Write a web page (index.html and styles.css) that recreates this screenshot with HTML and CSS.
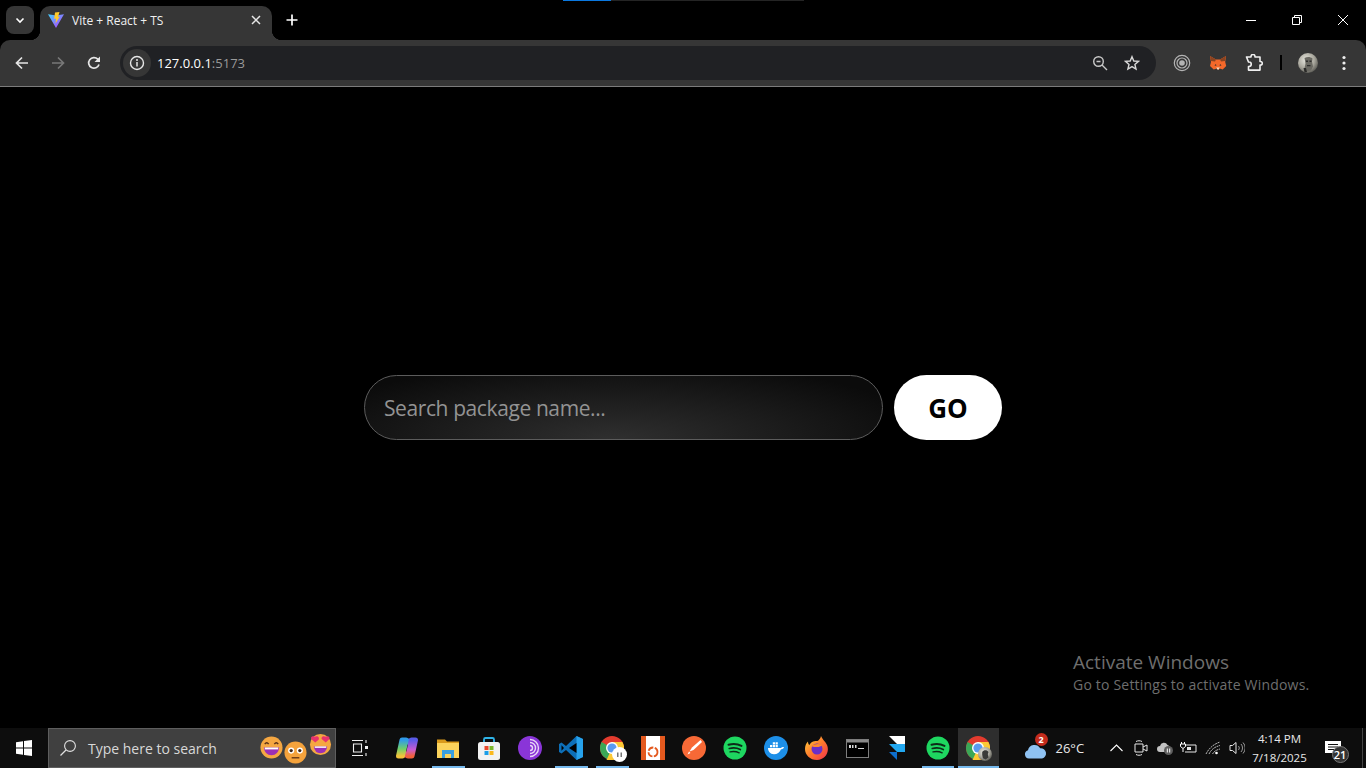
FILE: index.html
```html
<!DOCTYPE html>
<html lang="en">
<head>
  <meta charset="UTF-8" />
  <meta name="viewport" content="width=device-width, initial-scale=1.0"/>
  <title>Vite + React + TS</title>
  <link rel="stylesheet" href="styles.css">
</head>
<body>

  <svg class="defs" width="0" height="0">
    <defs>
      <symbol id="chrome" viewBox="0 0 24 24">
        <circle cx="12" cy="12" r="12" fill="#e33b2e"/>
        <path d="M12 12 1.600 6A12 12 0 0 0 8 23.300Z" fill="#3aa757"/>
        <path d="M12 12 6.500 24H12A12 12 0 0 0 22.400 6H12Z" fill="#fcc934"/>
        <circle cx="12" cy="12" r="6" fill="#fff"/>
        <circle cx="12" cy="12" r="4.600" fill="#5a9bf0"/>
      </symbol>
      <symbol id="spotify" viewBox="0 0 24 24">
        <circle cx="12" cy="12" r="11.500" fill="#1ed760"/>
        <g fill="none" stroke="#0d2b18" stroke-linecap="round">
          <path d="M5.500 8.800c4.500-1.300 9-1 13 1.100" stroke-width="2"/>
          <path d="M6.300 12.500c4-1 7.700-.7 11 1" stroke-width="1.700"/>
          <path d="M7 15.900c3.300-.8 6.400-.5 9.200.9" stroke-width="1.400"/>
        </g>
      </symbol>
    </defs>
  </svg>

  <div class="loader"><div class="loader-fill"></div></div>

  <header class="chrome">
    <div class="tabstrip">
      <button class="tab-menu">
        <svg width="12" height="12" viewBox="0 0 12 12"><path d="M2.500 4.500 6 8l3.500-3.500" fill="none" stroke="#fff" stroke-width="1.600"/></svg>
      </button>
      <div class="tab">
        <svg class="favicon" width="16" height="16" viewBox="0 0 16 16">
          <defs>
            <linearGradient id="viteA" x1="0" y1="0" x2="1" y2="1"><stop offset="0" stop-color="#41d1ff"/><stop offset="1" stop-color="#bd34fe"/></linearGradient>
          </defs>
          <path d="M0 2.200 8 16l8-13.800-5 .9L8 3.600 5 3Z" fill="url(#viteA)"/>
          <path d="M7 .5 11.500 0 10 5l1.800-.4L7.500 11.500l.6-5-1.900.4Z" fill="#ffc928"/>
        </svg>
        <span class="tab-title">Vite + React + TS</span>
        <svg class="tab-close" width="10" height="10" viewBox="0 0 10 10"><path d="M1 1l8 8M9 1 1 9" stroke="#e6e6e6" stroke-width="1.500"/></svg>
      </div>
      <button class="new-tab">
        <svg width="12" height="12" viewBox="0 0 12 12"><path d="M6 .5v11M.5 6h11" stroke="#fff" stroke-width="1.700"/></svg>
      </button>
      <div class="window-controls">
        <button class="win-btn"><svg width="10" height="10" viewBox="0 0 10 10"><path d="M0 5.500h10" stroke="#fff"/></svg></button>
        <button class="win-btn"><svg width="10" height="10" viewBox="0 0 10 10"><path d="M.5 2.500h7v7h-7zM2.500 2.500v-2h7v7h-2" fill="none" stroke="#fff"/></svg></button>
        <button class="win-btn"><svg width="10" height="10" viewBox="0 0 10 10"><path d="M0 0l10 10M10 0 0 10" stroke="#fff"/></svg></button>
      </div>
    </div>

    <div class="toolbar">
      <button class="tool-btn">
        <svg width="16" height="16" viewBox="0 0 16 16"><path d="M14 8H3M8 2.500 2.500 8 8 13.500" fill="none" stroke="#e6e6e6" stroke-width="1.700"/></svg>
      </button>
      <button class="tool-btn">
        <svg width="16" height="16" viewBox="0 0 16 16"><path d="M2 8h11M8 2.500 13.500 8 8 13.500" fill="none" stroke="#787878" stroke-width="1.700"/></svg>
      </button>
      <button class="tool-btn">
        <svg width="16" height="16" viewBox="0 0 16 16"><path d="M13 9.500A5.300 5.300 0 1 1 11.800 4.200L13.400 5.800" fill="none" stroke="#e6e6e6" stroke-width="1.700"/><path d="M14 1.500V7H8.500Z" fill="#e6e6e6"/></svg>
      </button>

      <div class="omnibox">
        <span class="site-info">
          <svg width="16" height="16" viewBox="0 0 16 16"><circle cx="8" cy="8" r="6.500" fill="none" stroke="#e6e6e6" stroke-width="1.400"/><path d="M8 7v4.500" stroke="#e6e6e6" stroke-width="1.500"/><circle cx="8" cy="4.900" r="1" fill="#e6e6e6"/></svg>
        </span>
        <span class="url">127.0.0.1<span class="url-port">:5173</span></span>
        <svg class="omni-icon" width="16" height="16" viewBox="0 0 16 16"><circle cx="6.500" cy="6.500" r="4.800" fill="none" stroke="#c8c8c8" stroke-width="1.400"/><path d="M4.500 6.500h4M10 10l5 5" stroke="#c8c8c8" stroke-width="1.400"/></svg>
        <svg class="omni-icon" width="16" height="16" viewBox="0 0 16 16"><path d="M8 1.700 9.800 6l4.700.4-3.600 3 1.100 4.600L8 11.600 3.900 14 5 9.400l-3.500-3L6.200 6Z" fill="none" stroke="#d8d8d8" stroke-width="1.400"/></svg>
      </div>

      <button class="tool-btn">
        <svg width="18" height="18" viewBox="0 0 18 18"><circle cx="9" cy="9" r="7.700" fill="none" stroke="#b4b4b4" stroke-width="1.200"/><circle cx="9" cy="9" r="5" fill="none" stroke="#b4b4b4" stroke-width="1.200"/><circle cx="9" cy="9" r="2.800" fill="#b4b4b4"/></svg>
      </button>
      <button class="tool-btn">
        <svg width="18" height="16" viewBox="0 0 18 16"><path d="M1 1l6 3.500h4L17 1l-.8 6 1 4-3.500 3.500-3-1-1.500 1.500-1.500-1.500-3 1L1 11l1-4Z" fill="#f4682a"/><path d="M1 1l6 3.500L6 6.500 2 6ZM17 1l-6 3.500L12 6.500l4-.5Z" fill="#8a4320"/><path d="M6.800 9 5.500 10.800 7.500 10.500ZM11.200 9l1.300 1.800-2-.3Z" fill="#2b2b2b"/><path d="M7.200 12.500h3.600L9 15Z" fill="#f6dcc6"/></svg>
      </button>
      <button class="tool-btn">
        <svg width="18" height="18" viewBox="0 0 18 18"><path d="M1.500 3.500H6V3a2 2 0 0 1 4 0v.5h5V8h.5a1.800 1.800 0 0 1 0 3.600H15v5H3.500V13H4a2 2 0 0 0 0-4.500h-.5Z" transform="translate(0 -.5)" fill="none" stroke="#f0f0f0" stroke-width="1.600" stroke-linejoin="round"/></svg>
      </button>
      <span class="tool-sep"></span>
      <button class="tool-btn">
        <svg width="20" height="20" viewBox="0 0 20 20"><defs><radialGradient id="avatar" cx=".4" cy=".35" r=".7"><stop offset="0" stop-color="#e8e8e0"/><stop offset=".6" stop-color="#a8a69c"/><stop offset="1" stop-color="#55554f"/></radialGradient></defs><circle cx="10" cy="10" r="10" fill="url(#avatar)"/><path d="M6.500 5c2.500-1.500 6-1.500 8 .5l-.5 3 1 5-2 4-4 1-2.500-3 1-5Z" fill="#6a6962"/><path d="M8 7.500h2v1.500H8zM11.500 7.500h2v1.500h-2zM9 12h3.500v1.200H9z" fill="#2e2e2c"/><path d="M5.500 15h2.500l1 4H6.500Z" fill="#2a2a28"/></svg>
      </button>
      <button class="tool-btn">
        <svg width="4" height="16" viewBox="0 0 4 16"><circle cx="2" cy="2.500" r="1.600" fill="#eee"/><circle cx="2" cy="8" r="1.600" fill="#eee"/><circle cx="2" cy="13.500" r="1.600" fill="#eee"/></svg>
      </button>
    </div>
  </header>

  <main class="page">
    <form class="search">
      <input class="search-input" type="text" placeholder="Search package name..." />
      <button class="search-btn" type="button">GO</button>
    </form>
  </main>

  <div class="activate">
    <div class="activate-title">Activate Windows</div>
    <div class="activate-sub">Go to Settings to activate Windows.</div>
  </div>

  <footer class="taskbar">
    <button class="start">
      <svg width="16" height="16" viewBox="0 0 16 16"><path d="M0 2.300 7 1.300v6.300H0ZM8 1.100 16 0v7.600H8ZM0 8.500h7v6.300L0 13.800ZM8 8.500h8V16l-8-1.100Z" fill="#fff"/></svg>
    </button>
    <div class="task-search">
      <svg width="18" height="18" viewBox="0 0 18 18"><circle cx="11" cy="7" r="5.400" fill="none" stroke="#e0e0e0" stroke-width="1.100"/><path d="M7 11l-5.500 5.500" stroke="#e0e0e0" stroke-width="1.300"/></svg>
      <span class="task-search-text">Type here to search</span>
      <svg class="emoji emoji-a" width="23" height="23" viewBox="0 0 24 24"><circle cx="12" cy="12" r="11.500" fill="#f5a742"/><path d="M5 8.500q2-3 4 0M15 8.500q2-3 4 0" fill="none" stroke="#5a3018" stroke-width="1.500"/><path d="M4 12h16q-1 8-8 8t-8-8Z" fill="#9b2fb5"/><path d="M5 12h14v2H5z" fill="#fff"/></svg>
      <svg class="emoji emoji-b" width="23" height="23" viewBox="0 0 24 24"><circle cx="12" cy="12" r="11.500" fill="#f5a33c"/><circle cx="7.500" cy="10" r="3.200" fill="#fff"/><circle cx="16.500" cy="10" r="3.200" fill="#fff"/><circle cx="7.500" cy="10" r="1.700" fill="#40281a"/><circle cx="16.500" cy="10" r="1.700" fill="#40281a"/><path d="M8 17.500h8" stroke="#6a3a18" stroke-width="1.500"/></svg>
      <svg class="emoji emoji-c" width="23" height="23" viewBox="0 0 24 24"><circle cx="12" cy="12" r="11" fill="#f5a742"/><path d="M5 14h14q-1 7-7 7t-7-7Z" fill="#9b2fb5"/><path d="M6 14h12v1.500H6z" fill="#fff"/><path d="M6.500 10 2.500 6.500C1 4.500 3.500 2 6 4c2.500-2 5.500.5 4 3ZM17.500 10l-4-3.500c-1.500-2 1.500-4.500 4-2.500 2.500-2 5 .5 3.500 2.500Z" fill="#e8336d"/></svg>
    </div>
    <button class="task-view">
      <svg width="18" height="18" viewBox="0 0 18 18"><path d="M1 1.500h11M1 16.500h11M2.500 5h8v8h-8z" fill="none" stroke="#f0f0f0" stroke-width="1.100"/><path d="M15 1v3M15 14v3" stroke="#f0f0f0" stroke-width="1.100"/><path d="M14 7h3v3h-3z" fill="#f0f0f0"/></svg>
    </button>

    <div class="apps">
      <div class="app">
        <svg width="24" height="24" viewBox="0 0 24 24"><defs><linearGradient id="copA" x1="0" y1="0" x2="0" y2="1"><stop offset="0" stop-color="#2f9bea"/><stop offset=".55" stop-color="#6fd06a"/><stop offset="1" stop-color="#f2c23a"/></linearGradient><linearGradient id="copB" x1="0" y1="0" x2="0" y2="1"><stop offset="0" stop-color="#5a5be8"/><stop offset=".6" stop-color="#c85bd0"/><stop offset="1" stop-color="#f0603a"/></linearGradient></defs><path d="M9 2.500h8v6H11Z" fill="#3f7fe8"/><path d="M6 21.500h8v-6H8Z" fill="#e8506a"/><path d="M7 4h4L7.500 20H3.500Z" fill="url(#copA)" stroke="url(#copA)" stroke-width="5" stroke-linejoin="round"/><path d="M17 20h-4l3.500-16h4Z" fill="url(#copB)" stroke="url(#copB)" stroke-width="5" stroke-linejoin="round"/></svg>
      </div>
      <div class="app app-open">
        <svg width="22" height="22" viewBox="0 0 22 22"><path d="M0 2.500h8l2 2h12v2H0Z" fill="#d99a1c"/><path d="M0 6h22v15H0Z" fill="#fbd35c"/><path d="M5 13h12v8h-3v-4H8v4H5Z" fill="#3aa0e0"/></svg>
      </div>
      <div class="app">
        <svg width="24" height="24" viewBox="0 0 24 24"><path d="M7 6V3.500a1.500 1.500 0 0 1 1.500-1.500h7A1.500 1.500 0 0 1 17 3.500V6" fill="none" stroke="#2fb4e8" stroke-width="1.800"/><rect x="1" y="6" width="22" height="18" rx="2.500" fill="#f2f2f2"/><path d="M7.500 10H11.500V14H7.500Z" fill="#e8492c"/><path d="M12.500 10H16.500V14H12.500Z" fill="#7cb82a"/><path d="M7.500 15H11.500V19H7.500Z" fill="#1c9ee8"/><path d="M12.500 15H16.500V19H12.500Z" fill="#fbb91c"/></svg>
      </div>
      <div class="app">
        <svg width="24" height="24" viewBox="0 0 24 24"><circle cx="12" cy="12" r="12" fill="#8a35d8"/><g fill="none" stroke="#e8d8f5"><path d="M12 3.500a8.500 8.500 0 0 1 0 17" stroke-width="1.400"/><path d="M12 6.500a5.500 5.500 0 0 1 0 11" stroke-width="1.400"/><path d="M12 9.500a2.500 2.500 0 0 1 0 5" stroke-width="1.400"/></g></svg>
      </div>
      <div class="app app-open">
        <svg width="24" height="24" viewBox="0 0 24 24"><path d="M17.500 0 24 3v18l-6.500 3L7 14l-4.500 3.500L0 16V8l2.500-1.500L7 10Z" fill="#0d6fb8"/><path d="M17.500 0 24 3v18l-6.500 3Z" fill="#27a2ec"/><path d="M17.500 7v10L10 12Z" fill="#000"/><path d="M2.500 9.200 5 12l-2.500 2.800Z" fill="#000"/></svg>
      </div>
      <div class="app app-open">
        <svg class="app-stack" width="24" height="24"><use href="#chrome"/></svg>
        <span class="chrome-badge"><svg width="7" height="6" viewBox="0 0 7 6"><path d="M1 .5h1.500V5H1zM4.500.5H6V5H4.500z" fill="#777"/></svg></span>
      </div>
      <div class="app">
        <svg width="24" height="24" viewBox="0 0 24 24"><rect width="24" height="24" fill="#fff"/><path d="M0 0h5v24H0ZM19 0h5v24h-5Z" fill="#e4591e"/><circle cx="12" cy="16" r="4.500" fill="none" stroke="#e4591e" stroke-width="1.800" stroke-dasharray="6 1.500"/></svg>
      </div>
      <div class="app">
        <svg width="24" height="24" viewBox="0 0 24 24"><circle cx="12" cy="12" r="12" fill="#f76936"/><path d="M18.500 4 10 11.500 7.500 15.500 11.500 14 20 6Z" fill="#fff"/><path d="M5.500 18.500 7 15.500 8.500 17Z" fill="#fff"/></svg>
      </div>
      <div class="app"><svg width="24" height="24"><use href="#spotify"/></svg></div>
      <div class="app">
        <svg width="24" height="24" viewBox="0 0 24 24"><circle cx="12" cy="12" r="12" fill="#1d8fe8"/><path d="M4 12h13c.6-1 2-1.300 3-.8-.5 1.400-1.800 2-3 2-1 3-4 5-7 5-4 0-6-3-6-6.200Z" fill="#fff"/><path d="M6 9h2.200v2.200H6zM8.800 9H11v2.200H8.800zM11.600 9h2.200v2.200h-2.200zM8.800 6.300H11v2.200H8.800zM11.600 6.300h2.200v2.200h-2.200z" fill="#fff"/></svg>
      </div>
      <div class="app">
        <svg width="24" height="24" viewBox="0 0 24 24"><defs><linearGradient id="foxA" x1="0" y1="0" x2="1" y2="1"><stop offset="0" stop-color="#ffd23c"/><stop offset=".5" stop-color="#ff7a2c"/><stop offset="1" stop-color="#f0304c"/></linearGradient></defs><path d="M16 0c1 3 4 5 6 9 3 7-2 15-10 15C5 24 0 19 0 13c0-3 1-6 3-7.500 0 2 .5 3 1.500 3.500C6 5 10 5 12.500 5 14 4 15.500 2.500 16 0Z" fill="url(#foxA)"/><circle cx="12" cy="13" r="5.500" fill="#6a2fc8"/><path d="M6 10c3-2 8-3 11-1-1 1.500-3 2-5 2-2 0-4 0-6-1Z" fill="#ff8a2c"/></svg>
      </div>
      <div class="app">
        <svg width="23" height="19" viewBox="0 0 23 19"><rect x=".5" y=".5" width="22" height="18" fill="#000" stroke="#7e7e7e"/><path d="M1 1h21v2.500H1Z" fill="#8a8a8a"/><path d="M3 6h2v3H3zM6 6h1.500v3H6zM9 6h1.500v3H9zM12 9h6v1h-6z" fill="#d8d8d8"/></svg>
      </div>
      <div class="app">
        <svg width="18" height="24" viewBox="0 0 18 24"><path d="M0 0h16v8H8Z" fill="#fff"/><path d="M0 8h16v8H8L0 8Z" fill="#22a8f0"/><path d="M0 16h8v8Z" fill="#0d6ecc"/></svg>
      </div>
      <div class="app app-open"><svg width="24" height="24"><use href="#spotify"/></svg></div>
      <div class="app app-open app-active">
        <svg class="app-stack" width="24" height="24"><use href="#chrome"/></svg>
        <svg class="chrome-avatar" width="14" height="14" viewBox="0 0 20 20"><circle cx="10" cy="10" r="10" fill="url(#avatar)"/><path d="M6 7c2-3 7-3 9 0l-1 3 1 5-4 3-4-2-1-5Z" fill="#3a3a38"/></svg>
      </div>
    </div>

    <div class="weather">
      <svg class="weather-cloud" width="25" height="16" viewBox="0 0 26 17"><path d="M6 16.500a4.500 4.500 0 0 1-1-8.800 7 7 0 0 1 13-2 5.500 5.500 0 0 1 2 10.800Z" fill="#8fc2f2"/></svg>
      <span class="weather-badge">2</span>
      <span class="weather-temp">26°C</span>
    </div>

    <div class="tray">
      <span class="tray-item"><svg width="13" height="8" viewBox="0 0 13 8"><path d="M.5 7 6.500 1l6 6" fill="none" stroke="#fff" stroke-width="1.100"/></svg></span>
      <span class="tray-item"><svg width="14" height="18" viewBox="0 0 14 18"><path d="M1 5h8v8H1zM9 8l4-2v6l-4-2" fill="none" stroke="#e8e8e8"/><path d="M2 2.500c2-1 4-1 6 0M2 15.500c2 1 4 1 6 0" fill="none" stroke="#e8e8e8"/></svg></span>
      <span class="tray-item"><svg width="16" height="14" viewBox="0 0 16 14"><path d="M3 11a3 3 0 0 1 0-6 4 4 0 0 1 7.500-1A3.500 3.500 0 0 1 13 9v2Z" fill="#c4c4c4"/><circle cx="11.500" cy="9.500" r="4.500" fill="#5e5e5e"/><path d="M10.300 7.500v4M12.700 7.500v4" stroke="#fff"/></svg></span>
      <span class="tray-item"><svg width="17" height="12" viewBox="0 0 17 12"><path d="M5 3h11v7H5" fill="none" stroke="#e8e8e8"/><path d="M7 5h4v3H7z" fill="#e8e8e8"/><path d="M1.500 0v2M4.500 0v2M.5 2h5v2.500L3 6.500.5 4.500ZM3 6.500V10" fill="none" stroke="#fff"/></svg></span>
      <span class="tray-item"><svg width="16" height="14" viewBox="0 0 16 14"><path d="M1 13C4 7 9 3 15 1M4 13c2-4 5-7 11-8.500M7.500 13c1.500-2.500 3.500-4 7.500-5" fill="none" stroke="#b8b8b8" stroke-dasharray="2 .7"/><circle cx="11.500" cy="12" r="1.300" fill="#fff"/></svg></span>
      <span class="tray-item"><svg width="16" height="14" viewBox="0 0 16 14"><path d="M1 4.500h2.500L7 1.500v11L3.500 9.500H1Z" fill="none" stroke="#e8e8e8"/><path d="M9.500 5a3 3 0 0 1 0 4M12 3a6 6 0 0 1 0 8M14 1.500a8 8 0 0 1 0 11" fill="none" stroke="#bdbdbd" stroke-width=".8"/></svg></span>
    </div>

    <div class="clock">
      <div>4:14 PM</div>
      <div>7/18/2025</div>
    </div>

    <div class="notify">
      <svg width="17" height="15" viewBox="0 0 17 15"><path d="M0 0h16v12H0Z" fill="#fff"/><path d="M3 3.500h10M3 6h10M3 8.500h6" stroke="#111"/></svg>
      <span class="notify-count">21</span>
    </div>
    <span class="show-desktop"></span>
  </footer>

</body>
</html>
```

FILE: styles.css
```css
* {
  box-sizing: border-box;
}

body {
  font-family: "Open Sans", "Noto Sans", Arial, sans-serif;
  background: #000;
  color: #fff;
  margin: 0;
  height: 100vh;
  display: flex;
  flex-direction: column;
  overflow: hidden;
  position: relative;
}

button {
  padding: 0;
  border: none;
  background: none;
  color: inherit;
  font-family: inherit;
  display: flex;
  align-items: center;
  justify-content: center;
  cursor: pointer;
}

.defs {
  position: absolute;
}

.loader {
  position: absolute;
  top: 0;
  left: 563px;
  width: 241px;
  height: 1px;
  background: #242424;
}

.loader-fill {
  width: 48px;
  height: 100%;
  background: #0a78e0;
}

/* browser chrome */
.tabstrip {
  height: 40px;
  display: flex;
  padding-left: 6px;
}

.tab-menu {
  width: 28px;
  height: 28px;
  margin-top: 6px;
  border-radius: 8px;
  background: #363636;
}

.tab {
  position: relative;
  width: 232px;
  height: 34px;
  margin-top: 6px;
  margin-left: 6px;
  padding: 0 11px 6px 8px;
  display: flex;
  align-items: center;
  background: #363636;
  border-radius: 10px 10px 0 0;
}

.tab::before,
.tab::after {
  content: "";
  position: absolute;
  bottom: 0;
  width: 10px;
  height: 10px;
}

.tab::before {
  left: -10px;
  background: radial-gradient(circle at 0 0, transparent 10px, #363636 10.500px);
}

.tab::after {
  right: -10px;
  background: radial-gradient(circle at 100% 0, transparent 10px, #363636 10.500px);
}

.favicon {
  flex: none;
}

.tab-title {
  margin-left: 8px;
  flex: 1;
  font-size: 12px;
  color: #f0f0f0;
  white-space: nowrap;
}

.new-tab {
  width: 28px;
  height: 28px;
  margin-top: 6px;
  margin-left: 6px;
}

.window-controls {
  margin-left: auto;
  display: flex;
}

.win-btn {
  width: 46px;
  height: 40px;
}

.toolbar {
  height: 47px;
  padding: 0 4px 1px;
  display: flex;
  align-items: center;
  background: #363636;
  border-bottom: 1px solid #7c7c7c;
  border-radius: 10px 10px 0 0;
}

.tool-btn {
  width: 36px;
  height: 34px;
  flex: none;
}

.omnibox {
  flex: 1;
  height: 34px;
  margin: 0 8px;
  padding: 0 16px 0 3px;
  display: flex;
  align-items: center;
  gap: 16px;
  background: #202124;
  border-radius: 17px;
}

.site-info {
  width: 28px;
  height: 28px;
  display: flex;
  align-items: center;
  justify-content: center;
  background: #363636;
  border-radius: 50%;
}

.url {
  flex: 1;
  margin-left: -10px;
  font-size: 13px;
  color: #fff;
}

.url-port {
  color: #9a9a9a;
}

.tool-sep {
  width: 2px;
  height: 15px;
  margin: 0 8px;
  background: #000;
  flex: none;
}

/* page */
.page {
  flex: 1;
  display: flex;
  align-items: center;
  justify-content: center;
}

.search {
  display: flex;
  gap: 11px;
}

.search-input {
  width: 519px;
  height: 65px;
  padding: 0 19px;
  font-family: inherit;
  font-size: 21px;
  letter-spacing: -0.4px;
  color: #fff;
  background: radial-gradient(ellipse 62% 125% at 48% 100%, #2f2f2f, #0b0b0b 100%);
  border: 1px solid #5c5c5c;
  border-radius: 33px;
  outline: none;
}

.search-input::placeholder {
  color: #939393;
  opacity: 1;
}

.search-btn {
  width: 108px;
  height: 65px;
  font-size: 26px;
  font-weight: 700;
  color: #000;
  background: #fff;
  border-radius: 33px;
}

.activate {
  position: absolute;
  left: 1073px;
  top: 650px;
  color: #6e6e6e;
}

.activate-title {
  font-size: 19px;
  line-height: 25px;
}

.activate-sub {
  font-size: 14px;
  line-height: 20px;
  letter-spacing: 0.2px;
}

/* taskbar */
.taskbar {
  height: 40px;
  flex: none;
  display: flex;
  align-items: center;
  background: #0d0d0d;
}

.start {
  width: 48px;
  height: 40px;
}

.task-search {
  position: relative;
  width: 288px;
  height: 40px;
  padding-left: 10px;
  display: flex;
  align-items: center;
  background: #404040;
  border: 1px solid #5e5e5e;
}

.task-search-text {
  margin-left: 11px;
  font-size: 14px;
  color: #d8d8d8;
}

.emoji {
  position: absolute;
}

.emoji-a {
  left: 211px;
  top: 7px;
}

.emoji-b {
  left: 235px;
  top: 12px;
}

.emoji-c {
  left: 260px;
  top: 4px;
}

.task-view {
  width: 48px;
  height: 40px;
}

.apps {
  display: flex;
  margin-left: 2.500px;
}

.app {
  position: relative;
  width: 41px;
  height: 40px;
  display: flex;
  align-items: center;
  justify-content: center;
}

.app:nth-child(n+12) {
  width: 40.250px;
}

.app-open::after {
  content: "";
  position: absolute;
  left: 4px;
  right: 4px;
  bottom: 0;
  height: 2px;
  background: #76b9ed;
}

.app-active {
  background: #2e2e2e;
}

.app-active::after {
  left: 0;
  right: 0;
}

.chrome-badge {
  position: absolute;
  left: 20px;
  top: 19px;
  width: 15px;
  height: 15px;
  display: flex;
  align-items: center;
  justify-content: center;
  background: #fff;
  border-radius: 50%;
}

.chrome-avatar {
  position: absolute;
  left: 20px;
  top: 19px;
}

.weather {
  position: relative;
  margin-left: 24px;
  width: 82px;
  display: flex;
  align-items: center;
}

.weather-cloud {
  margin-top: 6px;
}

.weather-badge {
  position: absolute;
  left: 12px;
  top: -4px;
  width: 13px;
  height: 13px;
  font-size: 9px;
  font-weight: 700;
  line-height: 13px;
  text-align: center;
  background: #c42b1c;
  border-radius: 50%;
}

.weather-temp {
  margin-left: 8px;
  font-size: 13px;
  color: #e8e8e8;
}

.tray {
  display: flex;
}

.tray-item {
  width: 24px;
  height: 40px;
  display: flex;
  align-items: center;
  justify-content: center;
}

.clock {
  width: 62px;
  font-size: 11.500px;
  line-height: 19px;
  text-align: center;
  color: #e8e8e8;
}

.notify {
  position: relative;
  width: 40px;
  height: 40px;
  margin-left: 3px;
  display: flex;
  align-items: center;
  justify-content: center;
}

.notify-count {
  position: absolute;
  left: 18px;
  top: 18px;
  width: 17px;
  height: 17px;
  font-size: 11px;
  font-weight: 600;
  line-height: 15px;
  text-align: center;
  background: #333;
  border: 1px solid #777;
  border-radius: 50%;
}

.show-desktop {
  width: 1px;
  height: 40px;
  margin-left: 8px;
  background: #444;
}
```
